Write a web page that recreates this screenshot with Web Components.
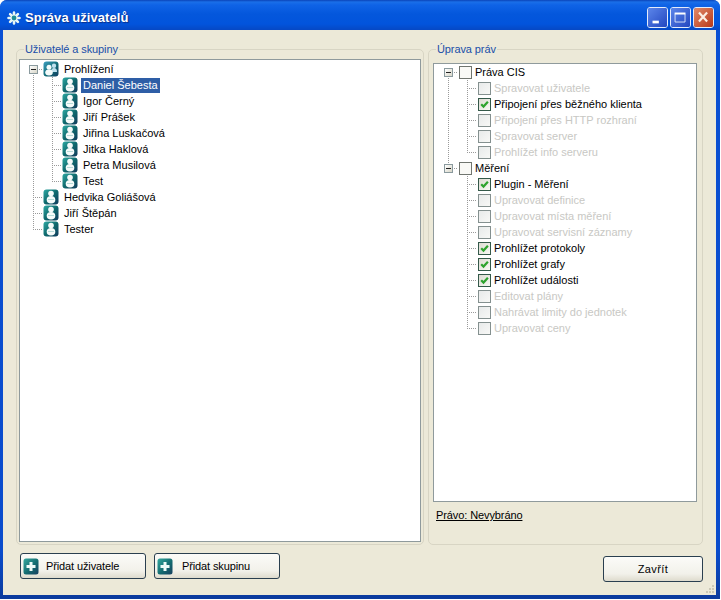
<!DOCTYPE html>
<html lang="cs"><head><meta charset="utf-8"><title>Správa uživatelů</title>
<style>
html,body{margin:0;padding:0;background:#fff}
body{width:721px;height:600px;overflow:hidden;font:11px/13px "Liberation Sans",Arial,sans-serif;color:#000}
</style></head><body>
<xp-window caption="Správa uživatelů">
  <split-row>
    <group-box caption="Uživatelé a skupiny" variant="left">
      <tree-view variant="left">
        <tree-row cells="x" icon="group" first>Prohlížení</tree-row>
        <tree-row cells="it" icon="person" selected>Daniel Šebesta</tree-row>
        <tree-row cells="it" icon="person">Igor Černý</tree-row>
        <tree-row cells="it" icon="person">Jiří Prášek</tree-row>
        <tree-row cells="it" icon="person">Jiřina Luskačová</tree-row>
        <tree-row cells="it" icon="person">Jitka Haklová</tree-row>
        <tree-row cells="it" icon="person">Petra Musilová</tree-row>
        <tree-row cells="il" icon="person">Test</tree-row>
        <tree-row cells="t" icon="person">Hedvika Goliášová</tree-row>
        <tree-row cells="t" icon="person">Jiří Štěpán</tree-row>
        <tree-row cells="l" icon="person">Tester</tree-row>
      </tree-view>
    </group-box>
    <group-box caption="Úprava práv" variant="right">
      <tree-view variant="right">
        <tree-row cells="x" check="off" first>Práva CIS</tree-row>
        <tree-row cells="it" check="dis" disabled>Spravovat uživatele</tree-row>
        <tree-row cells="it" check="on">Připojení přes běžného klienta</tree-row>
        <tree-row cells="it" check="dis" disabled>Připojení přes HTTP rozhraní</tree-row>
        <tree-row cells="it" check="dis" disabled>Spravovat server</tree-row>
        <tree-row cells="il" check="dis" disabled>Prohlížet info serveru</tree-row>
        <tree-row cells="y" check="off">Měření</tree-row>
        <tree-row cells="et" check="on">Plugin - Měření</tree-row>
        <tree-row cells="et" check="dis" disabled>Upravovat definice</tree-row>
        <tree-row cells="et" check="dis" disabled>Upravovat místa měření</tree-row>
        <tree-row cells="et" check="dis" disabled>Upravovat servisní záznamy</tree-row>
        <tree-row cells="et" check="on">Prohlížet protokoly</tree-row>
        <tree-row cells="et" check="on">Prohlížet grafy</tree-row>
        <tree-row cells="et" check="on">Prohlížet události</tree-row>
        <tree-row cells="et" check="dis" disabled>Editovat plány</tree-row>
        <tree-row cells="et" check="dis" disabled>Nahrávat limity do jednotek</tree-row>
        <tree-row cells="el" check="dis" disabled>Upravovat ceny</tree-row>
      </tree-view>
      <status-label>Právo: Nevybráno</status-label>
    </group-box>
  </split-row>
  <footer-bar>
    <xp-button icon style="width:126px">Přidat uživatele</xp-button>
    <xp-button icon wide style="width:126px">Přidat skupinu</xp-button>
    <xp-button close style="width:100px">Zavřít</xp-button>
  </footer-bar>
</xp-window>
<script>
const FONT='"Liberation Sans",Arial,sans-serif';
function el(name,html,render){
  customElements.define(name,class extends HTMLElement{
    connectedCallback(){
      if(this.shadowRoot)return;
      const r=this.attachShadow({mode:'open'});
      r.innerHTML=render?render(this):html;
    }
  });
}
const PERSON=`<svg width="16" height="16" viewBox="0 0 16 16"><defs><linearGradient id="p" x1="0" y1="0" x2="1" y2="1"><stop offset="0" stop-color="#2fa9a3"/><stop offset=".5" stop-color="#0f6a6e"/><stop offset="1" stop-color="#123a5c"/></linearGradient></defs><rect x=".5" y=".5" width="15" height="15" rx="3" fill="url(#p)"/><circle cx="8" cy="4.600" r="2.800" fill="#f6fbfa"/><ellipse cx="8" cy="10.800" rx="4.300" ry="3.800" fill="#f6fbfa"/><path d="M5 10.500h6" stroke="#b6dcd9" stroke-width="1"/></svg>`;
const GROUP=`<svg width="16" height="16" viewBox="0 0 16 16"><defs><linearGradient id="g" x1="0" y1="0" x2="1" y2="1"><stop offset="0" stop-color="#3f9fc0"/><stop offset=".55" stop-color="#126a74"/><stop offset="1" stop-color="#143f63"/></linearGradient></defs><rect x=".5" y=".5" width="15" height="15" rx="3" fill="url(#g)"/><circle cx="11" cy="4.800" r="2.200" fill="#bfe0ee"/><path d="M8 11c0-2.500 1.200-4 3-4s3.200 1.500 3 4z" fill="#bfe0ee"/><circle cx="6" cy="6.200" r="2.500" fill="#f4fbfa"/><ellipse cx="6" cy="11.500" rx="3.800" ry="2.900" fill="#f4fbfa"/></svg>`;
const PLUS=`<svg width="16" height="17" viewBox="0 0 16 17"><defs><linearGradient id="a" x1="0" y1="0" x2="1" y2="1"><stop offset="0" stop-color="#35a99f"/><stop offset=".55" stop-color="#136b70"/><stop offset="1" stop-color="#173f5f"/></linearGradient></defs><rect x=".5" y=".5" width="15" height="16" rx="2.500" fill="url(#a)"/><path d="M6.500 4h3v3h3v3h-3v3h-3v-3h-3V7h3z" fill="#eefaf8"/></svg>`;

el('xp-window','',h=>`<style>
:host{display:flex;position:relative;flex-direction:column;width:720px;height:599px;box-sizing:border-box;background:linear-gradient(#0a50d4,#0a4ccc 92%,#0b3a9c);border-radius:7px 7px 0 0;overflow:hidden;font:11px/13px ${FONT}}
.main{flex:1;min-height:0;display:flex;flex-direction:column;margin:0 4px 4px 3px;padding:13px 13px 13px;background:#ece9d8;box-sizing:border-box}
size-grip{position:absolute;right:5px;bottom:5px}
</style><xp-titlebar caption="${h.getAttribute('caption')}"></xp-titlebar><div class="main"><slot></slot></div><size-grip></size-grip>`);

el('size-grip',`<style>:host{display:block;width:10px;height:10px}svg{display:block}</style><svg width="10" height="10" viewBox="0 0 10 10" fill="#cbc8b6"><rect x="7" y="1" width="2" height="2"/><rect x="4" y="4" width="2" height="2"/><rect x="7" y="4" width="2" height="2"/><rect x="1" y="7" width="2" height="2"/><rect x="4" y="7" width="2" height="2"/><rect x="7" y="7" width="2" height="2"/></svg>`);

el('xp-titlebar','',h=>`<style>
:host{display:flex;align-items:center;height:30px;flex:none;box-sizing:border-box;padding:0 6px 0 7px;gap:4px;background:linear-gradient(#0b44b8 0,#1a6fe8 2px,#0f63e6 5px,#0457dc 14px,#0254dc 24px,#0648c4 30px)}
.t{flex:1;color:#fff;font:bold 13px/16px ${FONT};text-shadow:1px 1px 1px #0a2f8a;letter-spacing:.05px;margin-top:6px}
svg{display:block;flex:none}
.ico{margin-top:6px}
.b{display:flex;gap:2px;margin-top:4px}
.b svg{border-radius:3px;border:1px solid #e4ecfb;box-sizing:border-box}
</style>
<svg class="ico" width="14" height="14" viewBox="0 0 14 14"><g stroke="#e8f6f5" stroke-width="2.600" stroke-linecap="round"><path d="M7 1.500v11M1.500 7h11M3.100 3.100l7.800 7.800M10.900 3.100l-7.800 7.800"/></g><circle cx="7" cy="7" r="2.400" fill="#1f8f96"/></svg>
<span class="t">${h.getAttribute('caption')}</span>
<div class="b">
<svg width="21" height="21" viewBox="0 0 21 21"><defs><linearGradient id="m" x1="0" y1="0" x2="1" y2="1"><stop offset="0" stop-color="#5c86ea"/><stop offset="1" stop-color="#2347c0"/></linearGradient></defs><rect width="21" height="21" fill="url(#m)"/><rect x="5" y="14" width="7" height="3" fill="#fff"/></svg>
<svg width="21" height="21" viewBox="0 0 21 21"><defs><linearGradient id="n" x1="0" y1="0" x2="1" y2="1"><stop offset="0" stop-color="#5c86ea"/><stop offset="1" stop-color="#2347c0"/></linearGradient></defs><rect width="21" height="21" fill="url(#n)"/><path d="M4.500 6.500h11v9h-11z" fill="none" stroke="#dfe8fa"/><rect x="4" y="5" width="12" height="2" fill="#fff"/></svg>
<svg width="21" height="21" viewBox="0 0 21 21"><defs><linearGradient id="c" x1="0" y1="0" x2="1" y2="1"><stop offset="0" stop-color="#e08a68"/><stop offset="1" stop-color="#b8381a"/></linearGradient></defs><rect width="21" height="21" fill="url(#c)"/><path d="M5.500 5l9 10M14.500 5l-9 10" stroke="#fbeee2" stroke-width="2.400"/></svg>
</div>`);

el('split-row',`<style>:host{display:flex;flex:1;min-height:0;gap:4px}</style><slot></slot>`);

el('group-box','',h=>{
 const left=h.getAttribute('variant')==='left';
 return `<style>
:host{display:flex;flex:none;width:${left?408:275}px;box-sizing:border-box}
fieldset{flex:1;min-width:0;margin:0;display:flex;flex-direction:column;box-sizing:border-box;border:1px solid #d8d5c4;border-radius:5px;padding:${left?'3px 2px 2px':'7px 5px 0 4px'}}
legend{margin-left:${left?5:3}px;padding:0 1px;color:#1a4fa8;font:11px/13px ${FONT};letter-spacing:-.1px}
</style><fieldset><legend>${h.getAttribute('caption')}</legend><slot></slot></fieldset>`});

el('tree-view','',h=>{
 const left=h.getAttribute('variant')==='left';
 return `<style>
:host{display:block;box-sizing:border-box;background:#fff;border:1px solid #8f9a9c;${left?'flex:1;padding:1px 0 0 4px':'flex:none;height:439px;padding:0 0 0 5px'}}
</style><slot></slot>`});

const V='repeating-linear-gradient(to bottom,#9a9a9a 0 1px,transparent 1px 2px)';
const H='repeating-linear-gradient(to right,#9a9a9a 0 1px,transparent 1px 2px)';
el('tree-row','',h=>{
 const cells=[...h.getAttribute('cells')];
 const cellHtml=cells.map(c=>{
   if(c==='x'||c==='y')return `<span class="c ${c}"><tree-expander></tree-expander></span>`;
   return `<span class="c ${c}"></span>`}).join('');
 const icon=h.getAttribute('icon');
 const check=h.getAttribute('check');
 const lead=icon?`<span class="ic">${icon==='group'?GROUP:PERSON}</span>`:`<check-box state="${check}"></check-box>`;
 return `<style>
:host{display:flex;align-items:center;height:16px;white-space:nowrap;font:11px/13px ${FONT};color:#000}
.c{flex:none;width:19px;height:16px;position:relative;background-repeat:no-repeat}
.i{background-image:${V};background-size:1px 16px;background-position:9px 0}
.t{background-image:${V},${H};background-size:1px 16px,10px 1px;background-position:9px 0,9px 8px}
.l{background-image:${V},${H};background-size:1px 8px,10px 1px;background-position:9px 0,9px 8px}
.x{background-image:${V},${H};background-size:1px 8px,10px 1px;background-position:9px 8px,9px 8px}
.y{background-image:${V},${H};background-size:1px 8px,10px 1px;background-position:9px 0,9px 8px}
.ic{display:block;flex:none;width:16px;height:16px}
.ic svg{display:block}
check-box{margin-left:1px}
.lb{display:block;height:15px;line-height:15px;padding:0 2px;margin-left:${icon?3:1}px;${h.hasAttribute('selected')?'background:#2e5ea6;color:#fff;':''}${h.hasAttribute('disabled')?'color:#c8c8c4;':''}}
</style>${cellHtml}${lead}<span class="lb"><slot></slot></span>`});

el('tree-expander',`<style>
:host{position:absolute;left:5px;top:4px;width:9px;height:9px;box-sizing:border-box;border:1px solid #8a9a9e;background:linear-gradient(135deg,#fff,#d8d6c8)}
i{position:absolute;left:1px;top:3px;width:5px;height:1px;background:#222}
</style><i></i>`);

el('check-box','',h=>{
 const s=h.getAttribute('state');
 const border=s==='on'?'#34594a':s==='off'?'#70756f':'#84908f';
 const bg=s==='on'?'linear-gradient(135deg,#dcdcd2,#f8f8f4)':s==='off'?'#f9f9f6':'linear-gradient(135deg,#e8eaea,#f8f8f6)';
 return `<style>
:host{display:block;flex:none;width:13px;height:13px;box-sizing:border-box;border:1px solid ${border};background:${bg}}
svg{display:block}
</style>${s==='on'?'<svg width="11" height="11" viewBox="0 0 11 11"><path d="M2.200 5.200l2.300 2.400 4.400-4.900" fill="none" stroke="#2ea32e" stroke-width="2.200"/></svg>':''}`});

el('status-label',`<style>
:host{display:block;flex:none;margin:7px 0 0 3px;height:13px;font:11px/13px ${FONT};text-decoration:underline;color:#000;letter-spacing:-.1px}
</style><slot></slot>`);

el('footer-bar',`<style>
:host{display:flex;flex:none;align-items:flex-start;height:29px;margin:8px 0 0 4px;gap:8px}
::slotted([close]){margin-left:auto;margin-top:3px}
</style><slot></slot>`);

el('xp-button','',h=>{
 const icon=h.hasAttribute('icon');
 return `<style>
:host{display:flex;align-items:center;flex:none;height:26px;box-sizing:border-box;border:1px solid #2a3f4f;border-radius:3px;background:linear-gradient(#fbfbf8,#f2f1ea 70%,#dedbcd);font:11px/13px ${FONT};color:#000;${icon?'padding-left:2px':'justify-content:center'}}
svg{display:block;flex:none}
span{margin-left:${h.hasAttribute('wide')?9:7}px;${icon?'letter-spacing:-.12px':'letter-spacing:.4px'}}
:host(:not([icon])) span{margin-left:0}
</style>${icon?PLUS:''}<span><slot></slot></span>`});
</script>
</body></html>
